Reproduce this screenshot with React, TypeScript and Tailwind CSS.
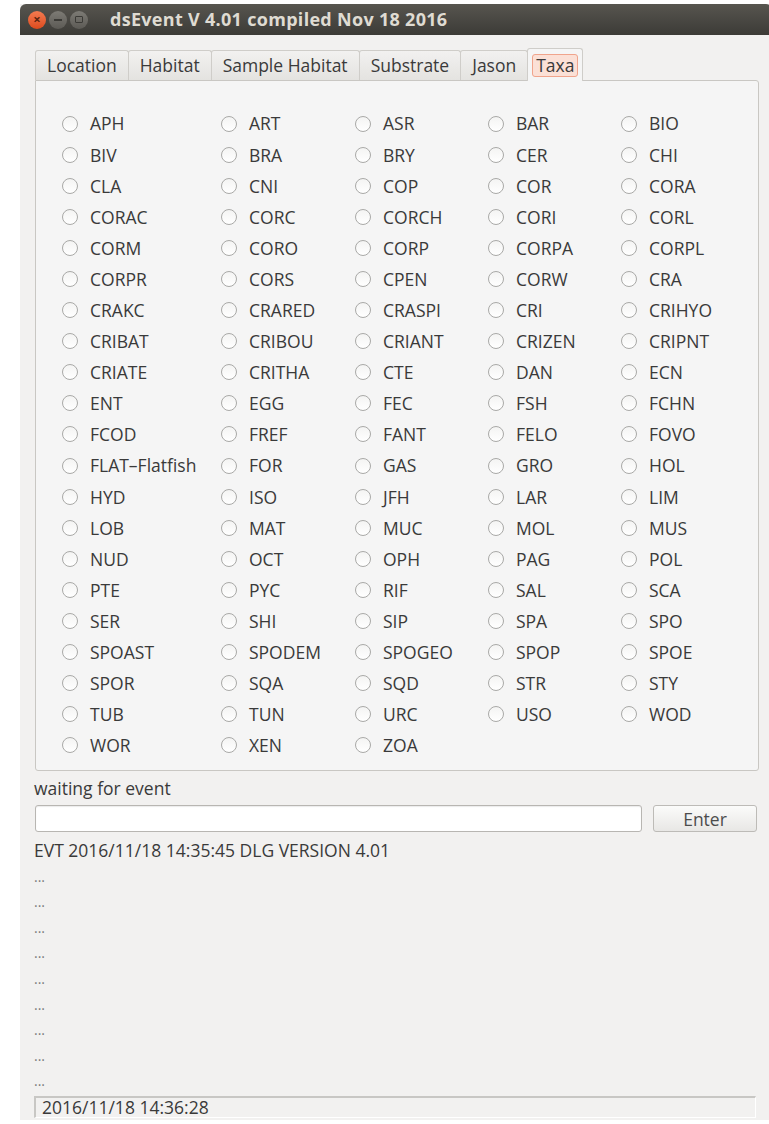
import React from 'react';

const taxa = [
  'APH', 'ART', 'ASR', 'BAR', 'BIO',
  'BIV', 'BRA', 'BRY', 'CER', 'CHI',
  'CLA', 'CNI', 'COP', 'COR', 'CORA',
  'CORAC', 'CORC', 'CORCH', 'CORI', 'CORL',
  'CORM', 'CORO', 'CORP', 'CORPA', 'CORPL',
  'CORPR', 'CORS', 'CPEN', 'CORW', 'CRA',
  'CRAKC', 'CRARED', 'CRASPI', 'CRI', 'CRIHYO',
  'CRIBAT', 'CRIBOU', 'CRIANT', 'CRIZEN', 'CRIPNT',
  'CRIATE', 'CRITHA', 'CTE', 'DAN', 'ECN',
  'ENT', 'EGG', 'FEC', 'FSH', 'FCHN',
  'FCOD', 'FREF', 'FANT', 'FELO', 'FOVO',
  'FLAT\u2013Flatfish', 'FOR', 'GAS', 'GRO', 'HOL',
  'HYD', 'ISO', 'JFH', 'LAR', 'LIM',
  'LOB', 'MAT', 'MUC', 'MOL', 'MUS',
  'NUD', 'OCT', 'OPH', 'PAG', 'POL',
  'PTE', 'PYC', 'RIF', 'SAL', 'SCA',
  'SER', 'SHI', 'SIP', 'SPA', 'SPO',
  'SPOAST', 'SPODEM', 'SPOGEO', 'SPOP', 'SPOE',
  'SPOR', 'SQA', 'SQD', 'STR', 'STY',
  'TUB', 'TUN', 'URC', 'USO', 'WOD',
  'WOR', 'XEN', 'ZOA',
];

const tabs = ['Location', 'Habitat', 'Sample Habitat', 'Substrate', 'Jason'];

function Radio({ label }: { label: string }) {
  return (
    <label className="flex items-center h-[31.1px] gap-[12px] whitespace-nowrap">
      <span className="w-[16px] h-[16px] rounded-full border border-[#a9a9a7] bg-gradient-to-b from-[#f4f4f3] to-[#ffffff] shrink-0" />
      <span>{label}</span>
    </label>
  );
}

export default function App() {
  return (
    <div
      className="w-[769px] h-[1124px] bg-white overflow-hidden text-[#3a3a3a] text-[17.5px]"
      style={{ fontFamily: '"Open Sans", "Noto Sans", sans-serif' }}
    >
      <div className="ml-[20px] mt-[4px] w-[752px] h-[1116px] flex flex-col bg-[#f2f1f0]">
        {/* title bar */}
        <div className="h-[31px] shrink-0 rounded-t-[6px] bg-gradient-to-b from-[#57554f] to-[#3c3b37] flex items-center pl-[8px]">
          <span className="w-[18px] h-[18px] rounded-full bg-gradient-to-b from-[#f47a4f] to-[#dc4a1c] flex items-center justify-center text-[#5a2410] text-[13px] font-bold leading-none">
            ×
          </span>
          <span className="ml-[3px] w-[18px] h-[18px] rounded-full bg-gradient-to-b from-[#7d7b75] to-[#5c5a55] flex items-center justify-center">
            <span className="w-[8px] h-[2px] bg-[#3b3a36]" />
          </span>
          <span className="ml-[3px] w-[18px] h-[18px] rounded-full bg-gradient-to-b from-[#7d7b75] to-[#5c5a55] flex items-center justify-center">
            <span className="w-[8px] h-[7px] border-[1.5px] border-[#3b3a36] rounded-[1px]" />
          </span>
          <span className="ml-[22px] text-[#dfdbd2] font-bold text-[18px] tracking-[0.3px]">
            dsEvent V 4.01 compiled Nov 18 2016
          </span>
        </div>

        <div className="flex-1 flex flex-col pl-[15px] pr-[13px]">
          {/* tabs */}
          <div className="flex items-end mt-[12px] h-[33px] shrink-0">
            {tabs.map((t) => (
              <div
                key={t}
                className="h-[30px] px-[11px] flex items-center border border-b-0 border-[#cfcdc9] bg-gradient-to-b from-[#f2f1f0] to-[#e4e3e0] -ml-px first:ml-0 rounded-t-[3px]"
              >
                {t}
              </div>
            ))}
            <div className="relative h-[33px] px-[4px] pt-[5px] border border-b-0 border-[#cfcdc9] bg-[#f5f5f5] -ml-px rounded-t-[3px] z-10 -mb-px">
              <div className="h-[23px] px-[3px] flex items-center border border-[#f0a48c] rounded-[3px] bg-[#fbe0d6]">
                Taxa
              </div>
            </div>
          </div>

          {/* taxa panel */}
          <div className="h-[691px] shrink-0 border border-[#c9c7c3] rounded-[3px] rounded-tl-none bg-[#f5f5f5] pl-[26px] pt-[27px]">
            <div className="grid grid-cols-[159px_134px_133px_133px_1fr]">
              {taxa.map((t) => (
                <Radio key={t} label={t} />
              ))}
            </div>
          </div>

          <div className="h-[34px] flex items-center -ml-px">waiting for event</div>

          <div className="flex gap-[11px] h-[27px] shrink-0">
            <div className="w-[607px] rounded-[3px] border border-[#b8b6b2] bg-white shadow-[inset_0_1px_1px_rgba(0,0,0,0.08)]" />
            <button className="w-[104px] rounded-[3px] border border-[#bdbbb7] bg-gradient-to-b from-[#fbfbfa] to-[#e8e7e5] text-[#4c4c4c]">
              Enter
            </button>
          </div>

          <div className="mt-[6px] -ml-px leading-[25.6px]">
            <div>EVT 2016/11/18 14:35:45 DLG VERSION 4.01</div>
            {Array.from({ length: 9 }).map((_, i) => (
              <div key={i} className="text-[#7b7b7b] text-[14px]">...</div>
            ))}
          </div>

          <div className="mt-[2px] -ml-px h-[22px] w-[722px] border-t-2 border-l-2 border-[#c8c7c4] border-r border-b border-r-white border-b-white flex items-center pl-[6px]">
            2016/11/18 14:36:28
          </div>
        </div>
      </div>
    </div>
  );
}
